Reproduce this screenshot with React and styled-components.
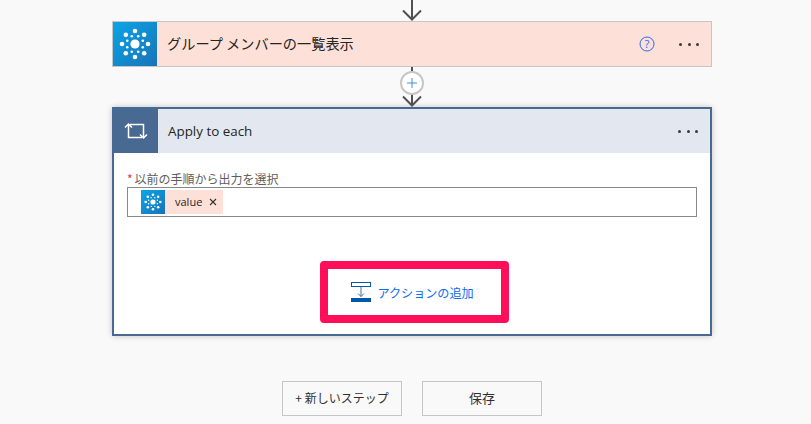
import React from 'react';
import styled, { createGlobalStyle } from 'styled-components';

const FONT = `"Noto Sans CJK JP", "Open Sans", sans-serif`;
const LATIN = `"Open Sans", "Noto Sans CJK JP", sans-serif`;

const GlobalStyle = createGlobalStyle`
  html, body {
    margin: 0;
    padding: 0;
    height: 100%;
    background: #f9f9f9;
    overflow: hidden;
  }
`;

const Page = styled.div`
  width: 811px;
  height: 424px;
  display: flex;
  flex-direction: column;
  align-items: center;
  padding-left: 13px;
  box-sizing: border-box;
  overflow: hidden;
  font-family: ${FONT};
`;

const Column = styled.div`
  width: 600px;
  display: flex;
  flex-direction: column;
  align-items: stretch;
`;

const TopArrow = styled.svg`
  display: block;
  width: 24px;
  height: 21px;
  align-self: center;
`;

const ActionCard = styled.div`
  height: 46px;
  box-sizing: border-box;
  border: 1px solid #c8c6c4;
  background: #fde0d7;
  display: flex;
  align-items: center;
`;

const ConnectorIcon = styled.div`
  width: 44px;
  height: 44px;
  flex: none;
  display: flex;
  align-items: center;
  justify-content: center;
  background: linear-gradient(135deg, #0aa5e6, #1a72b8);
`;

const ActionTitle = styled.div`
  flex: 1;
  padding: 0 0 3px 10px;
  font-size: 14.2px;
  color: #252423;
`;

const HelpIcon = styled.svg`
  width: 16px;
  height: 16px;
  margin-right: 24px;
`;

const Dots = styled.div`
  display: flex;
  gap: 5.5px;
  margin-right: ${(p) => p.$right}px;
  span {
    width: 3px;
    height: 3px;
    border-radius: 50%;
    background: #3b3a39;
  }
`;

const Connector = styled.div`
  height: 40px;
  position: relative;
  display: flex;
  justify-content: center;
`;

const ConnectorArrow = styled.svg`
  width: 24px;
  height: 40px;
  display: block;
`;

const PlusButton = styled.div`
  position: absolute;
  left: 288px;
  top: 4px;
  width: 24px;
  height: 24px;
  box-sizing: border-box;
  border-radius: 50%;
  border: 2px solid #c8c6c4;
  background: #fff;
  display: flex;
  align-items: center;
  justify-content: center;
`;

const LoopCard = styled.div`
  height: 229px;
  box-sizing: border-box;
  border: 2px solid #486991;
  background: #fff;
  box-shadow: 0 0 6px rgba(0, 0, 0, 0.22);
  display: flex;
  flex-direction: column;
`;

const LoopHeader = styled.div`
  height: 44px;
  flex: none;
  background: #e3e8f0;
  display: flex;
  align-items: center;
`;

const LoopIcon = styled.div`
  width: 44px;
  height: 44px;
  flex: none;
  background: #486991;
  display: flex;
  align-items: center;
  justify-content: center;
`;

const LoopTitle = styled.div`
  flex: 1;
  padding-left: 10px;
  font-family: ${LATIN};
  font-size: 13.4px;
  color: #252423;
`;

const LoopBody = styled.div`
  flex: 1;
  padding: 18px 13px 0;
  display: flex;
  flex-direction: column;
`;

const FieldLabel = styled.div`
  height: 16px;
  line-height: 16px;
  font-size: 12px;
  color: #605e5c;
  white-space: nowrap;
  em {
    font-style: normal;
    color: #e0334c;
    margin-right: 2px;
  }
`;

const TokenInput = styled.div`
  height: 30px;
  box-sizing: border-box;
  border: 1px solid #8a8886;
  background: #fff;
  display: flex;
  align-items: center;
  padding-left: 13px;
`;

const Token = styled.div`
  height: 24px;
  display: flex;
  align-items: center;
  background: #fde0d7;
  font-family: ${LATIN};
  font-size: 11px;
  color: #252423;
`;

const TokenIcon = styled.div`
  width: 24px;
  height: 24px;
  display: flex;
  align-items: center;
  justify-content: center;
  background: linear-gradient(135deg, #0aa5e6, #1a72b8);
`;

const TokenText = styled.span`
  padding: 0 7px 2px 10px;
`;

const TokenClose = styled.svg`
  width: 8px;
  height: 8px;
  margin-right: 6px;
`;

const AddWrap = styled.div`
  margin-top: 44px;
  align-self: center;
  width: 189px;
  height: 62px;
  box-sizing: border-box;
  border: 8px solid #ff0f5a;
  border-radius: 4px;
  display: flex;
  align-items: center;
  padding-left: 23px;
  margin-left: 4px;
`;

const AddLink = styled.div`
  margin-left: 7px;
  font-size: 12.1px;
  color: #0f6cf0;
  white-space: nowrap;
`;

const Footer = styled.div`
  margin-top: 45px;
  display: flex;
  justify-content: center;
  gap: 20px;
`;

const FooterButton = styled.div`
  width: 120px;
  height: 35px;
  box-sizing: border-box;
  border: 1px solid #c8c6c4;
  background: #f9f9f9;
  display: flex;
  align-items: center;
  justify-content: center;
  padding-bottom: 2px;
  font-size: ${(p) => p.$size}px;
  white-space: pre;
  color: #323130;
`;

const SPOKES = [0, 45, 90, 135, 180, 225, 270, 315];

const GroupLogo = ({ size }) => (
  <svg width={size} height={size} viewBox="0 0 32 32" fill="#fff">
    <circle cx="16" cy="16" r="4.6" />
    {SPOKES.map((a) => {
      const r = (a * Math.PI) / 180;
      return <circle key={a} cx={16 + 13 * Math.cos(r)} cy={16 + 13 * Math.sin(r)} r="2.3" />;
    })}
    {SPOKES.map((a) => {
      const r = ((a + 22.5) * Math.PI) / 180;
      return <circle key={a} cx={16 + 8.4 * Math.cos(r)} cy={16 + 8.4 * Math.sin(r)} r="1.3" />;
    })}
  </svg>
);

const ThreeDots = ({ right }) => (
  <Dots $right={right}>
    <span />
    <span />
    <span />
  </Dots>
);

const App = () => (
  <Page>
    <GlobalStyle />
    <Column>
      <TopArrow viewBox="0 0 24 21" fill="none" stroke="#505050" strokeWidth="2">
        <path d="M12 0V19" />
        <path d="M3 10.5L12 19.5L21 10.5" />
      </TopArrow>

      <ActionCard>
        <ConnectorIcon>
          <GroupLogo size={32} />
        </ConnectorIcon>
        <ActionTitle>グループ メンバーの一覧表示</ActionTitle>
        <HelpIcon viewBox="0 0 16 16" fill="none">
          <circle cx="8" cy="8" r="7" stroke="#2a6df4" />
          <text x="8" y="12" textAnchor="middle" fontSize="11.5" fontFamily="Open Sans" fill="#2a6df4">?</text>
        </HelpIcon>
        <ThreeDots right={12} />
      </ActionCard>

      <Connector>
        <ConnectorArrow viewBox="0 0 24 40" fill="none" stroke="#505050" strokeWidth="2">
          <path d="M12 0V39" />
          <path d="M3 29.5L12 38.5L21 29.5" />
        </ConnectorArrow>
        <PlusButton>
          <svg width="12" height="12" viewBox="0 0 12 12" stroke="#3f8fdc" strokeWidth="1">
            <path d="M6 1V11M1 6H11" />
          </svg>
        </PlusButton>
      </Connector>

      <LoopCard>
        <LoopHeader>
          <LoopIcon>
            <svg width="24" height="20" viewBox="0 0 24 20" fill="none" stroke="#fff" strokeWidth="1.5">
              <path d="M1 6.5L4.5 3L8 6.5" />
              <path d="M4.5 3.5V16.5H18" />
              <path d="M23 13.5L19.5 17L16 13.5" />
              <path d="M19.5 16.5V3.5H6" />
            </svg>
          </LoopIcon>
          <LoopTitle>Apply to each</LoopTitle>
          <ThreeDots right={12} />
        </LoopHeader>
        <LoopBody>
          <FieldLabel>
            <em>*</em>以前の手順から出力を選択
          </FieldLabel>
          <TokenInput>
            <Token>
              <TokenIcon>
                <GroupLogo size={18} />
              </TokenIcon>
              <TokenText>value</TokenText>
              <TokenClose viewBox="0 0 8 8" stroke="#323130" strokeWidth="1.1">
                <path d="M1 1L7 7M7 1L1 7" />
              </TokenClose>
            </Token>
          </TokenInput>
          <AddWrap>
            <svg width="20" height="20" viewBox="0 0 20 20" fill="none">
              <rect x="0.5" y="0.5" width="19" height="4" fill="#fff" stroke="#0058ad" />
              <path d="M10 5V14.5M7 11.5L10 14.5L13 11.5" stroke="#41719c" />
              <rect x="0" y="16" width="20" height="4" fill="#0058ad" />
            </svg>
            <AddLink>アクションの追加</AddLink>
          </AddWrap>
        </LoopBody>
      </LoopCard>

      <Footer>
        <FooterButton $size={12}>+ 新しいステップ</FooterButton>
        <FooterButton $size={13}>保存</FooterButton>
      </Footer>
    </Column>
  </Page>
);

export default App;
